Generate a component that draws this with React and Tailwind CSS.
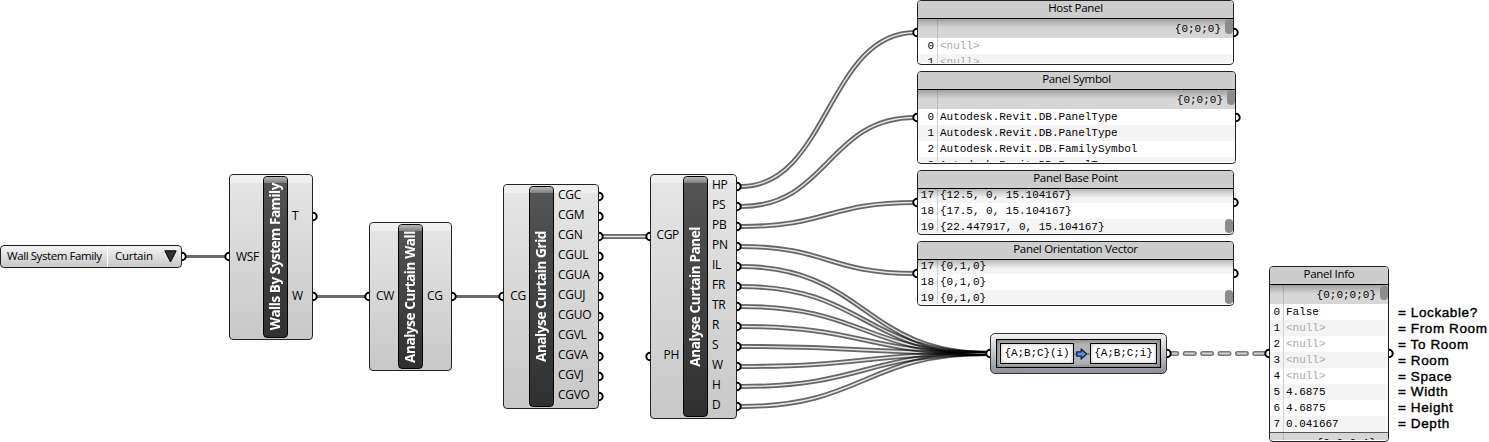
const sans = "font-['Open_Sans','Noto_Sans',sans-serif]";
const mono = "font-['Liberation_Mono',monospace]";

const single = [
  'M184 256.5H227',
  'M315 296.5H367',
  'M454 296.5H501',
];

const sources = [266, 286, 306, 326, 346, 366, 386, 406];
const curve = (x1, y1, x2, y2, k) => {
  const d = (x2 - x1) * k;
  return `M${x1} ${y1}C${x1 + d} ${y1} ${x2 - d} ${y2} ${x2} ${y2}`;
};
const double = [
  'M602 236.5H648',
  curve(741, 186.5, 915, 32.5, 0.5),
  curve(741, 206.5, 915, 117.5, 0.5),
  curve(741, 226.5, 915, 202.5, 0.5),
  curve(741, 246.5, 915, 273.5, 0.5),
  ...sources.map((y) => curve(741, y + 0.5, 988, 353.5, 0.5)),
];

const ports = [
  [182, 256.5], [229, 256.5], [313, 216.5], [313, 296.5],
  [369, 296.5], [452, 296.5], [503, 296.5],
  ...[196, 216, 236, 256, 276, 296, 316, 336, 356, 376, 396].map((y) => [599, y + 0.5]),
  [650, 236.5], [650, 356.5],
  ...[186, 206, 226, 246, ...sources].map((y) => [737, y + 0.5]),
  [917, 32.5], [917, 117.5], [917, 202.5], [917, 273.5],
  [1234, 32.5], [1236, 117.5], [1234, 202.5], [1234, 273.5],
  [990, 353.5], [1167, 353.5], [1269, 353.5], [1389, 353.5],
];

function Wires() {
  return (
    <svg className="absolute inset-0" width="1489" height="442" fill="none">
      {double.map((d, i) => (
        <mask key={i} id={`w${i}`} maskUnits="userSpaceOnUse" x="0" y="0" width="1489" height="442">
          <path d={d} stroke="#fff" strokeWidth="5" />
          <path d={d} stroke="#2c2c2c" strokeWidth="1.4" />
        </mask>
      ))}
      {single.map((d) => <path key={d} d={d} stroke="#696969" strokeWidth="3" />)}
      {double.map((d, i) => (
        <path key={i} d={d} stroke="#000" strokeOpacity=".6" strokeWidth="7" mask={`url(#w${i})`} />
      ))}
      <path d="M1170 353.5H1266" stroke="#787878" strokeWidth="5" strokeLinecap="round" strokeDasharray="9 8.4" strokeDashoffset="2.2" />
      <path d="M1170 353.5H1266" stroke="#d0d0d0" strokeWidth="1.8" strokeLinecap="round" strokeDasharray="9 8.4" strokeDashoffset="2.2" />
      {ports.map(([x, y]) => (
        <circle key={`${x},${y}`} cx={x} cy={y} r="3.7" fill="#fff" stroke="#000" strokeWidth="2" />
      ))}
    </svg>
  );
}

function Node({ place, left, title, right, leftClass, rightClass, titleClass = '' }) {
  return (
    <div className={`absolute flex rounded-[4px] border border-[#222] bg-linear-to-b from-[#e6e6e6] to-[#c8c8c8] py-px text-[12px] tracking-[-0.3px] text-black ${sans} ${place}`}>
      <div className="absolute inset-x-0 top-0 h-[8px] rounded-t-[3px] bg-white/40" />
      <div className={`flex flex-col items-end ${leftClass}`}>
        {left.map((t) => <div key={t} className="h-[20px] leading-[20px]">{t}</div>)}
      </div>
      <div className="relative flex w-[25px] shrink-0 items-center justify-center overflow-hidden rounded-[4px] border border-black bg-linear-to-b from-[#555] to-[#303030]">
        <div className="absolute inset-x-0 top-0 h-[6px] bg-linear-to-b from-[#b8b8b8] to-[#808080]" />
        <div className={`relative rotate-180 whitespace-nowrap text-[13.5px] font-bold leading-[23px] tracking-[-0.4px] text-white [writing-mode:vertical-rl] ${titleClass}`}>{title}</div>
      </div>
      <div className={`relative flex flex-col items-start ${rightClass}`}>
        {right.map((t) => <div key={t} className="h-[20px] leading-[20px]">{t}</div>)}
      </div>
    </div>
  );
}

function Group({ label }) {
  return (
    <div className="flex h-[19px] shrink-0 bg-[#d6d6d6]">
      <div className="w-[var(--gutter)] border-r border-[#b8b8b8]" />
      <div className="flex-1 pr-[12px] text-right leading-[20px]">{label}</div>
    </div>
  );
}

function Row({ index, value, odd }) {
  return (
    <div className={`flex h-[16px] shrink-0 leading-[16px] ${odd ? 'bg-[#f4f4f4]' : 'bg-white'}`}>
      <div className="w-[var(--gutter)] border-r border-[#d0d0d0] pr-[3px] text-right">{index}</div>
      <div className={`pl-[2px] tracking-[-0.02px] whitespace-pre ${value === '<null>' ? 'text-[#aaa]' : ''}`}>{value}</div>
    </div>
  );
}

function Panel({ place, title, group, rows, start = 0, tail, bodyClass = '', thumb, gutter = '[--gutter:20px]' }) {
  return (
    <div className={`absolute flex flex-col overflow-hidden rounded-[4px] border border-[#222] bg-white pb-px text-[11px] text-black ${mono} ${gutter} ${place}`}>
      <div className={`h-[18px] shrink-0 border-b border-black bg-[#cdcdcd] text-center text-[11.5px] leading-[14px] tracking-[-0.3px] ${sans}`}>{title}</div>
      <div className="relative flex-1 overflow-hidden">
        <div className={`flex flex-col ${bodyClass}`}>
          {group && <Group label={group} />}
          {rows.map((v, i) => <Row key={i} index={start + i} value={v} odd={(start + i) % 2 === 1} />)}
          {tail && <div className="border-t border-[#555]"><Group label={tail} /></div>}
        </div>
        <div className="absolute inset-x-0 top-0 h-[9px] bg-linear-to-b from-black/25 to-transparent" />
        <div className={`absolute right-0 w-[8px] rounded-[4px] bg-[#8c8c8c] ${thumb}`} />
      </div>
    </div>
  );
}

function PathMapper() {
  return (
    <div className={`absolute left-[990px] top-[333px] h-[41px] w-[177px] rounded-[5px] border border-[#333] bg-linear-to-b from-[#f4f4f4] from-0% via-[#c4c4c8] via-50% to-[#8e8e9c] p-[5px] text-[11px] text-black ${mono}`}>
      <div className="flex h-[29px] items-center justify-between border border-black bg-[#b4b4b6] px-[3px] shadow-[inset_0_0_5px_#666]">
        <div className="h-[21px] w-[74px] border border-black bg-white text-center leading-[19px] tracking-[-0.1px] shadow-[inset_0_0_4px_#bbb]">{'{A;B;C}(i)'}</div>
        <svg width="16" height="14" viewBox="0 0 16 14">
          <path d="M0 7H16" stroke="#555" />
          <path d="M2.7 4.9H7.2V2L12.6 7L7.2 12V9.1H2.7Z" fill="#5a90e0" stroke="#0d1f45" strokeWidth="1.3" strokeLinejoin="round" />
        </svg>
        <div className="h-[21px] w-[67px] border border-black bg-white text-center leading-[19px] tracking-[-0.1px] shadow-[inset_0_0_4px_#bbb]">{'{A;B;C;i}'}</div>
      </div>
    </div>
  );
}

const notes = ['Lockable?', 'From Room', 'To Room', 'Room', 'Space', 'Width', 'Height', 'Depth'];

export default function App() {
  return (
    <div className="relative h-[442px] w-[1489px] overflow-hidden bg-white">
      <Wires />

      <div className={`absolute left-0 top-[245px] flex h-[23px] w-[182px] items-stretch rounded-[4px] border border-[#222] bg-linear-to-b from-[#f4f4f4] to-[#c8c8c8] text-[11.5px] leading-[19px] text-black ${sans}`}>
        <div className="w-[107px] border-r border-white pl-[6px] whitespace-nowrap tracking-[-0.42px]">Wall System Family</div>
        <div className="pl-[7px] tracking-[-0.25px]">Curtain</div>
        <svg className="ml-auto mr-[4px] mt-[4px]" width="13" height="13" viewBox="0 0 13 13">
          <path d="M.8 .8H12.2L6.5 12Z" fill="#333" stroke="#000" />
        </svg>
      </div>

      <Node place="left-[229px] top-[174px] w-[84px] h-[166px]" left={['WSF']} title="Walls By System Family" right={['T', 'W']} leftClass="w-[33px] pr-[4px] pt-[71px]" rightClass="pl-[4px] pt-[30px] gap-[60px]" titleClass="tracking-[-0.45px]" />
      <Node place="left-[369px] top-[222px] w-[83px] h-[149px]" left={['CW']} title="Analyse Curtain Wall" right={['CG']} leftClass="w-[28px] pr-[4px] pt-[62px]" rightClass="pl-[4px] pt-[62px]" />
      <Node place="left-[503px] top-[184px] w-[96px] h-[225px]" left={['CG']} title="Analyse Curtain Grid" right={['CGC', 'CGM', 'CGN', 'CGUL', 'CGUA', 'CGUJ', 'CGUO', 'CGVL', 'CGVA', 'CGVJ', 'CGVO']} leftClass="w-[25px] pr-[3px] pt-[100px]" rightClass="pl-[4px] -top-px" />
      <Node place="left-[650px] top-[174px] w-[87px] h-[245px]" left={['CGP', 'PH']} title="Analyse Curtain Panel" right={['HP', 'PS', 'PB', 'PN', 'IL', 'FR', 'TR', 'R', 'S', 'W', 'H', 'D']} leftClass="w-[32px] pr-[4px] pt-[49px] gap-[100px]" rightClass="pl-[4px] -top-px" />

      <Panel place="left-[917px] top-0 w-[317px] h-[65px]" title="Host Panel" group="{0;0;0}" rows={['<null>', '<null>']} thumb="top-0 h-[15px]" />
      <Panel place="left-[917px] top-[71px] w-[319px] h-[93px]" title="Panel Symbol" group="{0;0;0}" rows={['Autodesk.Revit.DB.PanelType', 'Autodesk.Revit.DB.PanelType', 'Autodesk.Revit.DB.FamilySymbol', 'Autodesk.Revit.DB.PanelType']} thumb="top-0 h-[15px]" />
      <Panel place="left-[917px] top-[170px] w-[317px] h-[65px]" title="Panel Base Point" start={17} rows={['{12.5, 0, 15.104167}', '{17.5, 0, 15.104167}', '{22.447917, 0, 15.104167}']} bodyClass="-mt-[2px]" thumb="bottom-0 h-[14px]" />
      <Panel place="left-[917px] top-[241px] w-[317px] h-[65px]" title="Panel Orientation Vector" start={17} rows={['{0,1,0}', '{0,1,0}', '{0,1,0}']} bodyClass="-mt-[2px]" thumb="bottom-0 h-[14px]" />
      <Panel place="left-[1269px] top-[266px] w-[120px] h-[176px]" title="Panel Info" group="{0;0;0;0}" rows={['False', '<null>', '<null>', '<null>', '<null>', '4.6875', '4.6875', '0.041667']} tail="{0;0;0;1}" gutter="[--gutter:14px]" thumb="top-px h-[14px]" />

      <PathMapper />

      <div className="absolute left-[1398px] top-[305px] flex flex-col whitespace-nowrap font-['Liberation_Sans',Arial,sans-serif] text-[13.5px] tracking-[0.6px] text-black [-webkit-text-stroke:0.4px_black]">
        {notes.map((n) => <div key={n} className="h-[15.9px] leading-[16px]">= {n}</div>)}
      </div>
    </div>
  );
}
